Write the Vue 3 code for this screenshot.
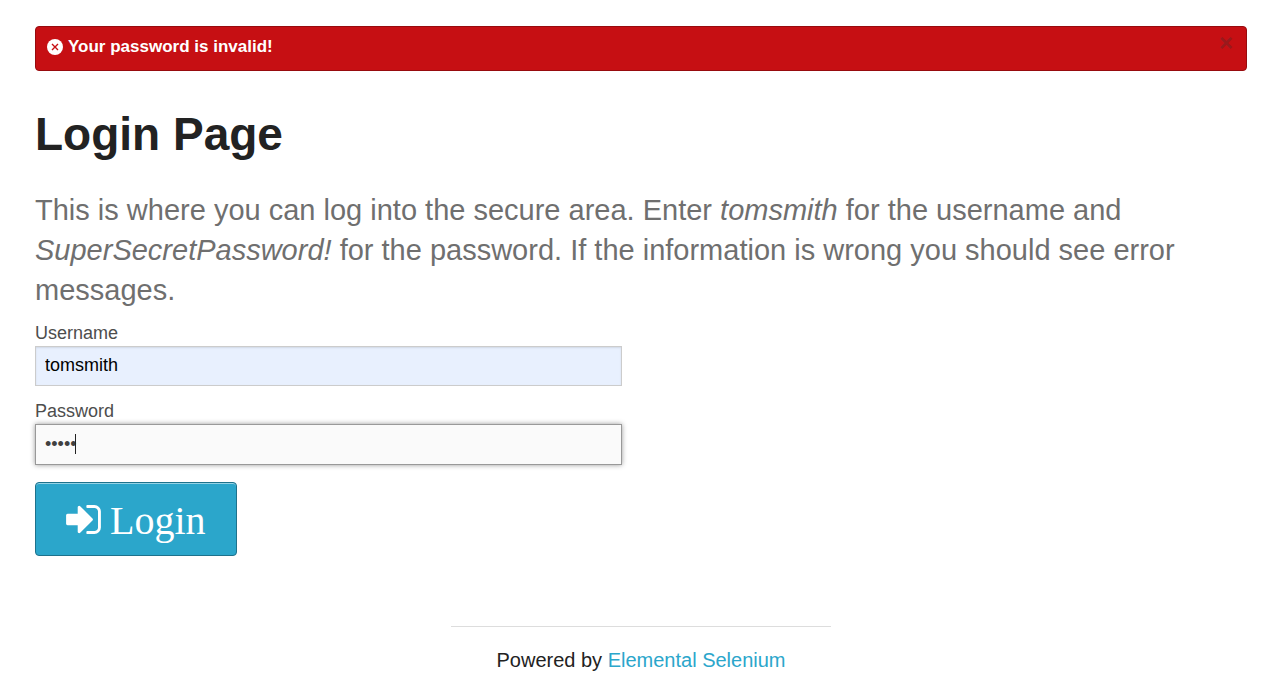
<script setup>
import { ref } from 'vue'

const username = ref('tomsmith')
const password = ref('super')
const showAlert = ref(true)
</script>

<template>
  <div class="page">
    <div v-if="showAlert" class="alert" role="alert">
      <svg class="alert-icon" viewBox="0 0 16 16" aria-hidden="true">
        <circle cx="8" cy="8" r="8" />
        <path d="M5 5l6 6M11 5l-6 6" />
      </svg>
      <span>Your password is invalid!</span>
      <button class="close" type="button" aria-label="Close" @click="showAlert = false">×</button>
    </div>

    <main>
      <h2>Login Page</h2>
      <p class="subheader">
        This is where you can log into the secure area. Enter <em>tomsmith</em> for the username and
        <em>SuperSecretPassword!</em> for the password. If the information is wrong you should see error messages.
      </p>

      <form @submit.prevent>
        <div class="field">
          <label for="username">Username</label>
          <input id="username" v-model="username" class="filled" type="text" name="username" />
        </div>
        <div class="field">
          <label for="password">Password</label>
          <div class="control">
            <input id="password" v-model="password" class="active" type="password" name="password" />
            <span class="caret"></span>
          </div>
        </div>
        <button class="login" type="submit">
          <svg viewBox="0 256 1536 1280" aria-hidden="true">
            <path d="M1184 896q0 26-19 45l-544 544q-19 19-45 19t-45-19-19-45v-288H64q-26 0-45-19t-19-45V704q0-26 19-45t45-19h448V352q0-26 19-45t45-19 45 19l544 544q19 19 19 45zm352-352v704q0 119-84.5 203.5T1248 1536H928q-13 0-22.5-9.5T896 1504q0-4-1-20t-.5-26.5 3-23.5 10-19.5 20.5-6.5h320q66 0 113-47t47-113V544q0-66-47-113t-113-47H936l-11.5-1-11.5-3-8-5.5-7-9-2-13.5q0-4-1-20t-.5-26.5 3-23.5 10-19.5T928 256h320q119 0 203.5 84.5T1536 544z" />
          </svg>
          <span>Login</span>
        </button>
      </form>
    </main>

    <footer>
      <div class="powered">Powered by <a href="#">Elemental Selenium</a></div>
    </footer>
  </div>
</template>

<style>
body {
  margin: 0;
  background: #fff;
}
</style>

<style scoped>
.page,
.page * {
  box-sizing: border-box;
}
.page {
  padding: 26px 19px 0 35px;
  font-family: "Liberation Sans", Arial, sans-serif;
  color: #222;
}
.alert {
  position: relative;
  display: flex;
  align-items: center;
  gap: 5px;
  padding: 10px 11px 13px;
  border: 1px solid #970b0e;
  border-radius: 4px;
  background: #c60f13;
  color: #fff;
  font-size: 17px;
  font-weight: bold;
  line-height: 20px;
}
.alert-icon {
  width: 16px;
  height: 16px;
  fill: currentColor;
}
.alert-icon path {
  stroke: #c60f13;
  stroke-width: 1.4;
}
.close {
  position: absolute;
  top: 4px;
  right: 13px;
  padding: 0;
  border: 0;
  background: none;
  color: #333;
  font: bold 24px/24px "Liberation Sans", Arial, sans-serif;
  opacity: 0.3;
}
h2 {
  margin: 31px 0 0;
  font-size: 46px;
  line-height: 64px;
}
.subheader {
  margin: 24px 0 10px;
  color: #6f6f6f;
  font-size: 29px;
  line-height: 40px;
}
.field {
  width: calc(50% - 19px);
  margin-bottom: 12px;
}
label {
  display: block;
  color: #4d4d4d;
  font-size: 18px;
  line-height: 26px;
}
.control {
  position: relative;
}
input {
  display: block;
  width: 100%;
  height: 40px;
  padding: 0 9px 2px;
  border: 1px solid #ccc;
  border-radius: 0;
  outline: none;
  box-shadow: inset 0 1px 2px rgba(0, 0, 0, 0.1);
  font: 18px "Liberation Sans", Arial, sans-serif;
}
.filled {
  background: #e8f0fe;
  color: #000;
}
.active {
  height: 41px;
  padding-bottom: 0;
  border-color: #999;
  background: #fafafa;
  color: #404040;
  box-shadow: 0 0 5px #999;
}
.caret {
  position: absolute;
  top: 10px;
  left: 40px;
  width: 1px;
  height: 20px;
  background: #222;
}
.login {
  display: flex;
  align-items: center;
  gap: 9px;
  margin-top: 17px;
  padding: 0 30px;
  height: 74px;
  border: 1px solid #1e728c;
  border-radius: 4px;
  background: #2ba6cb;
  box-shadow: inset 0 1px 0 rgba(255, 255, 255, 0.5);
  color: #fff;
  font: 40px/48px "Liberation Serif", "Times New Roman", serif;
}
.login svg {
  width: 35px;
  height: 29px;
  fill: currentColor;
}
.login span {
  padding-top: 4px;
}
footer {
  display: flex;
  justify-content: center;
  margin-top: 70px;
}
.powered {
  width: calc(33% - 20px);
  padding-top: 17px;
  border-top: 1px solid #ddd;
  font-size: 20px;
  line-height: 32px;
  text-align: center;
}
a {
  color: #2ba6cb;
  text-decoration: none;
}
</style>
